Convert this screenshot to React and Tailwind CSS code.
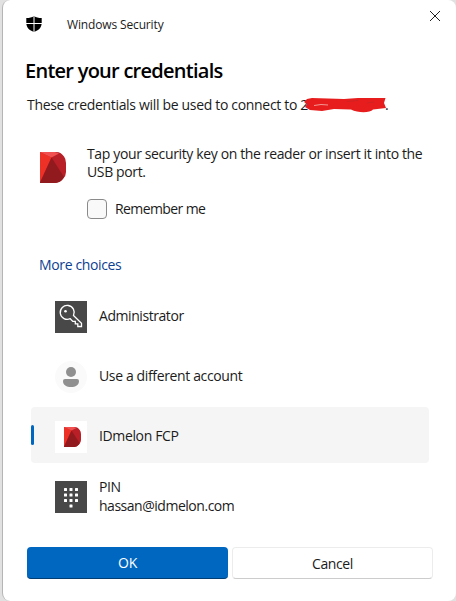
import React from "react";

function MelonLogo({ className }) {
  return (
    <svg className={className} viewBox="0 0 26 31" preserveAspectRatio="none">
      <path d="M0 0H16C20 0 22 2 24 4.500Q26 7 26 11V20Q26 24 23 27Q20 31 14 31H0Z" fill="#b81f27" />
      <path d="M0 0L11.500 5.500L0 30Z" fill="#ee3127" />
      <path d="M0 0H15L19 1.500L11.500 5.500Z" fill="#f0504f" />
      <path d="M11.500 5.500L24 25C21.500 29.500 18 31 13 31H0Z" fill="#911a1e" />
    </svg>
  );
}

function ShieldIcon() {
  return (
    <svg className="h-4 w-4" viewBox="0 0 16 16">
      <path d="M8 0C6 1.500 3.500 2 .3 2V7C.3 11.500 3.500 14.500 8 16C12.500 14.500 15.700 11.500 15.700 7V2C12.500 2 10 1.500 8 0Z" fill="#000" />
      <path d="M8 0V16M0 7.500H16" stroke="#fff" strokeWidth="1" />
    </svg>
  );
}

function KeyIcon() {
  return (
    <svg className="h-8 w-8 bg-[#484848]" viewBox="0 0 32 32" fill="none" stroke="#fff" strokeWidth="1.300">
      <path d="M18.500 14.500L26.500 22.300V25.500H22.800V22.900H20.300V20.400H17.800L15.300 17.700A7 7 0 1 1 18.500 14.500Z" />
      <circle cx="10.500" cy="10.300" r="1.300" fill="#fff" stroke="none" />
    </svg>
  );
}

function PersonIcon() {
  return (
    <svg className="h-8 w-8" viewBox="0 0 32 32">
      <circle cx="16" cy="16" r="16" fill="#fafafa" />
      <circle cx="16" cy="11" r="5" fill="#909090" />
      <path d="M10 18H22Q24 18 24 20C24 24 20.500 26 16 26S8 24 8 20Q8 18 10 18Z" fill="#909090" />
    </svg>
  );
}

function PinIcon() {
  return (
    <svg className="h-8 w-8 bg-[#484848]" viewBox="0 0 32 32" fill="#fff">
      {[7, 12.5, 18].map((y) => [9, 14.5, 20].map((x) => (
        <rect key={`${x}-${y}`} x={x} y={y} width="3" height="3" rx=".5" />
      )))}
      <rect x="14.500" y="23.500" width="3" height="3" rx=".5" />
    </svg>
  );
}

function Choice({ icon, children, selected }) {
  return (
    <div className={`flex h-14 items-center rounded ${selected ? "bg-[#f5f5f5]" : ""}`}>
      <span className={`h-5 w-[3px] rounded-full ${selected ? "bg-[#0067c0]" : ""}`} />
      <div className="ml-[21px] mt-1 h-8 w-8 shrink-0">{icon}</div>
      <div className="ml-3 whitespace-nowrap text-[14px] leading-[19px]">{children}</div>
    </div>
  );
}

export default function App() {
  return (
    <div className="h-[601px] w-[456px] overflow-hidden bg-[#e1e1e1] pl-[2px] font-['Open_Sans',sans-serif] text-[#1b1b1b]">
      <main className="flex h-[601px] w-[454px] flex-col rounded-lg border-l border-[#b5b5b5] bg-white">
        <header className="flex h-12 shrink-0 items-start">
          <div className="ml-[23px] mt-4"><ShieldIcon /></div>
          <span className="ml-[25px] mt-4 whitespace-nowrap text-[12px] leading-[18px] tracking-[-0.012em]">Windows Security</span>
          <svg className="ml-auto mr-4 mt-[11px] h-[10px] w-[10px]" viewBox="0 0 10 10" stroke="#222" strokeWidth="1">
            <path d="M0 0L10 10M10 0L0 10" />
          </svg>
        </header>
        <h1 className="ml-[22px] mt-[9px] whitespace-nowrap text-[20px] font-semibold leading-7 tracking-[-0.037em] text-black">Enter your credentials</h1>
        <p className="ml-6 mt-[10px] flex h-5 whitespace-nowrap text-[14px] leading-5">
          <span className="w-[277px] shrink-0 tracking-[-0.023em]">These credentials will be used to connect to 2</span>
          <svg className="mt-0.5 h-4 w-[82px] shrink-0" viewBox="0 0 82 16">
            <path d="M3 2L8 1L40 2L54 1H81.500L80 6L82 11L69 12.500C66 16 54 16 47 12.500L30 12L18 14L6 13L1 10L3 7L0 5Z" fill="#e71d1d" />
            <path d="M10 8.500L17 7.500L24 8" fill="none" stroke="#f6b5b0" strokeWidth=".8" />
            <path d="M43 4.500L54 3.500M63 6L70 5" fill="none" stroke="#b92828" strokeWidth=".5" />
          </svg>
          <span className="-ml-px">.</span>
        </p>
        <section className="ml-[37px] mt-[30px] flex">
          <MelonLogo className="mt-[7px] h-[31px] w-[26px] shrink-0" />
          <div className="ml-[21px] text-[14px]">
            <p className="whitespace-nowrap leading-[18px] tracking-[-0.026em]">Tap your security key on the reader or insert it into the<br />USB port.</p>
            <label className="mt-[18px] flex h-5 items-center">
              <span className="h-5 w-5 rounded border border-[#8a8a8a] bg-[#f9f9f9]" />
              <span className="mb-0.5 ml-2 tracking-[-0.043em]">Remember me</span>
            </label>
          </div>
        </section>
        <div className="ml-9 mt-[36px] h-5 text-[14px] leading-5 tracking-[-0.026em] text-[#0c4192]">More choices</div>
        <div className="ml-7 mt-3 flex w-[398px] flex-col gap-1">
          <Choice icon={<KeyIcon />}><span className="tracking-[-0.031em]">Administrator</span></Choice>
          <Choice icon={<PersonIcon />}><span className="tracking-[-0.026em]">Use a different account</span></Choice>
          <Choice selected icon={<div className="h-8 w-8 bg-white pl-[9px] pt-[6px]"><MelonLogo className="h-5 w-[17px]" /></div>}><span className="tracking-[-0.026em]">IDmelon FCP</span></Choice>
          <Choice icon={<PinIcon />}><div className="pt-0.5 tracking-[-0.034em]">PIN<br />hassan@idmelon.com</div></Choice>
        </div>
        <footer className="ml-6 mt-6 flex gap-1 text-[14px]">
          <button className="h-8 w-[201px] rounded border-b border-[#003e73] bg-[#0067c0] tracking-[-0.02em] text-white">OK</button>
          <button className="h-8 w-[201px] rounded border border-[#ececec] border-b-[#cccccc] bg-white tracking-[-0.03em]">Cancel</button>
        </footer>
      </main>
    </div>
  );
}
